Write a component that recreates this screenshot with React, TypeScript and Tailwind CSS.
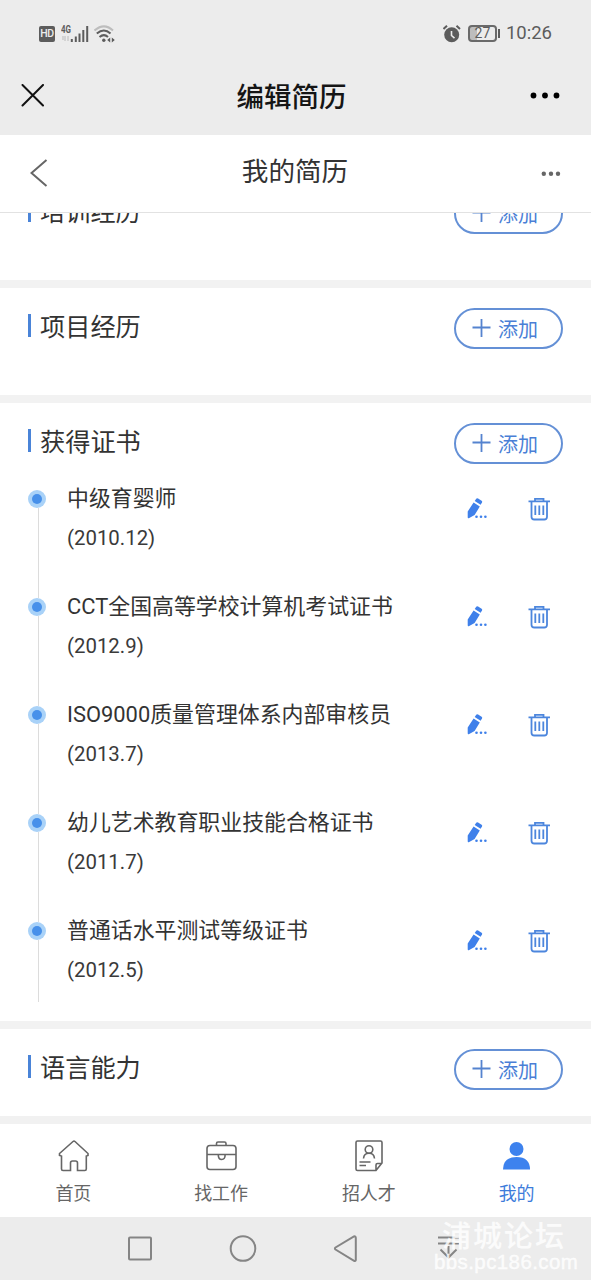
import type { ReactNode } from "react";

type Certificate = {
  name: string;
  date: string;
};

const certificates: Certificate[] = [
  { name: "中级育婴师", date: "(2010.12)" },
  { name: "CCT全国高等学校计算机考试证书", date: "(2012.9)" },
  { name: "ISO9000质量管理体系内部审核员", date: "(2013.7)" },
  { name: "幼儿艺术教育职业技能合格证书", date: "(2011.7)" },
  { name: "普通话水平测试等级证书", date: "(2012.5)" },
];

function StatusBar() {
  return (
    <div className="flex h-[67px] items-center justify-between pl-[39px] pr-[39px] text-[#5c5c5c]">
      <div className="flex items-center">
        <div className="flex h-4 w-4 items-center justify-center rounded-[2px] bg-[#5c5c5c] text-[10.500px] font-medium tracking-[-0.500px] text-[#ececec]">
          HD
        </div>
        <svg className="ml-[6px]" width="28" height="20" viewBox="0 0 28 20">
          <text x="0" y="8.500" fontSize="10.500" fontWeight="700" fill="#5c5c5c" textLength="10" lengthAdjust="spacingAndGlyphs">
            4G
          </text>
          <path d="M2 12v4M4 12v5M7 12v5" stroke="#c4c4c4" strokeWidth="1.200" />
          <path d="M10.800 15v3M14.800 12.500v5.500M18.500 9.500v8.500M22.300 6v12M26.200 2v16" stroke="#5c5c5c" strokeWidth="2" />
        </svg>
        <svg className="ml-[5px]" width="21" height="20" viewBox="0 0 21 20" fill="none">
          <path d="M0.500 6.500Q10 -1.800 19 6.500" stroke="#bdbdbd" strokeWidth="2" />
          <path d="M2.800 9.500Q10 3.500 16.500 9.500M5.500 13Q10 9.300 14 13" stroke="#5c5c5c" strokeWidth="2" />
          <circle cx="9.800" cy="16.300" r="1.700" fill="#5c5c5c" />
          <path d="M16.200 13.500v5l-3-2.500zM17.800 13.500v5l3-2.500z" fill="#5c5c5c" />
        </svg>
      </div>
      <div className="flex items-center">
        <svg width="20" height="20" viewBox="0 0 20 20" fill="none">
          <circle cx="8.700" cy="10.800" r="7.500" fill="#5c5c5c" />
          <path d="M0.500 5L4 1.800M13.500 1.800L17 5" stroke="#5c5c5c" strokeWidth="2" />
          <path d="M8.500 7v4.500l3 2.700" stroke="#ececec" strokeWidth="1.600" />
        </svg>
        <div className="ml-[5px] flex h-[17px] w-[29px] items-center justify-center rounded-[4px] border-2 border-[#6a6a6a] bg-linear-to-r from-[#bdbdbd] from-30% to-transparent to-30% text-[14px]">
          27
        </div>
        <div className="ml-px h-[9px] w-[2px] bg-[#5c5c5c]" />
        <span className="ml-[6px] pt-px text-[18.500px]">10:26</span>
      </div>
    </div>
  );
}

function TitleBar() {
  return (
    <div className="flex h-[68px] items-center justify-between pl-[21px] pr-[30px] pb-[10px]">
      <svg width="24" height="24" viewBox="0 0 24 24" stroke="#111" strokeWidth="2" strokeLinecap="round">
        <path d="M1.500 1l20.500 20.500M22 1L1.500 21.500" />
      </svg>
      <h1 className="pl-[8px] pt-[4px] text-[27.500px] leading-none font-medium text-[#151515]">编辑简历</h1>
      <svg width="31" height="8" viewBox="0 0 31 8" fill="#000">
        <circle cx="3.500" cy="3.500" r="2.900" />
        <circle cx="15" cy="3.500" r="2.900" />
        <circle cx="26.500" cy="3.500" r="2.900" />
      </svg>
    </div>
  );
}

function PageHeader() {
  return (
    <div className="flex h-[78px] shrink-0 items-center justify-between border-b border-[#e2e2e2] bg-white pl-[30px] pr-[30px]">
      <svg width="18" height="29" viewBox="0 0 18 29" fill="none" stroke="#666" strokeWidth="2">
        <path d="M16.500 1L1.500 14l15 13" />
      </svg>
      <h2 className="pb-[3px] pl-px text-[26.600px] leading-none text-[#333]">我的简历</h2>
      <svg width="20" height="6" viewBox="0 0 20 6" fill="#666">
        <circle cx="2.800" cy="2.800" r="2.200" />
        <circle cx="10" cy="2.800" r="2.200" />
        <circle cx="17" cy="2.800" r="2.200" />
      </svg>
    </div>
  );
}

function AddButton() {
  return (
    <button className="flex h-[41px] w-[109px] items-center rounded-full border-2 border-[#6490d6] pl-[16px] text-[20px] leading-none text-[#4a7fd6]">
      <svg width="19" height="19" viewBox="0 0 19 19" stroke="#5583cf" strokeWidth="1.800">
        <path d="M0.500 8.500h18M9.500 0v18" />
      </svg>
      <span className="ml-[7px] pt-[2px]">添加</span>
    </button>
  );
}

function Section({ title, children }: { title: string; children?: ReactNode }) {
  return (
    <section className="bg-white">
      <div className="flex h-[75px] items-start justify-between pr-7 pl-7 pt-[20px]">
        <div className="flex h-[38px] items-center">
          <span className="mb-[4px] h-[23px] w-[3px] bg-[#4a84d8]" />
          <h3 className="ml-[9px] pt-[2px] text-[25.200px] leading-none text-[#333]">{title}</h3>
        </div>
        <AddButton />
      </div>
      {children}
    </section>
  );
}

function EditIcon() {
  return (
    <svg width="22" height="22" viewBox="0 0 22 22" fill="#3f80ea">
      <path d="M7.600 4.500l6.200 4.100L8.600 17l-5.800 3.200Q1.600 20.500 1.700 19V13.500z" />
      <path d="M8.700 3l1.500-2.200q0.700-.8 1.900-.2l3.500 2.200q1 0.700 0.400 1.700l-1.400 2.300z" />
      <circle cx="10.500" cy="18.800" r="1.300" />
      <circle cx="15" cy="18.800" r="1.300" />
      <circle cx="19.400" cy="18.800" r="1.300" />
    </svg>
  );
}

function TrashIcon() {
  return (
    <svg width="22" height="24" viewBox="0 0 22 24" fill="none" stroke="#4c86dd" strokeWidth="1.800">
      <path d="M0.500 4.300h21.500M7 4V1.800h8.500V4M3.500 4.500V19.700q0 2.800 2.800 2.800h9.900q2.800 0 2.800-2.800V4.500M7.300 8.500v9.500M11.300 8.500v9.500M15.300 8.500v9.500" />
    </svg>
  );
}

function CertificateRow({ item, first, last }: { item: Certificate; first: boolean; last: boolean }) {
  return (
    <li className="flex h-[108px] pl-7 pr-[41px]">
      <div className="flex w-[18px] flex-col">
        <div className={`ml-[10px] h-3 w-px ${first ? "" : "bg-[#dcdcdc]"}`} />
        <div className="flex h-[18px] w-[18px] items-center justify-center rounded-full bg-[#a9d2f8]">
          <div className="h-2.5 w-2.5 rounded-full bg-[#4790ea]" />
        </div>
        <div className={`ml-[10px] w-px bg-[#dcdcdc] ${last ? "h-[62px]" : "flex-1"}`} />
      </div>
      <div className="ml-[21px] flex-1 pt-px text-[21.900px] leading-[40px] whitespace-nowrap text-[#333]">
        <p>{item.name}</p>
        <p className="-mt-px text-[20.400px] text-[#3a3a3a]">{item.date}</p>
      </div>
      <div className="flex h-[62px] items-center gap-[40px]">
        <EditIcon />
        <TrashIcon />
      </div>
    </li>
  );
}

function HomeIcon() {
  return (
    <path d="M16 1.500Q17 0.700 18 1.500L31 13.500v2l-1.700.5V29q0 1.500-1.500 1.500H20.500V23q0-2-2-2h-3q-2 0-2 2v7.500H6Q4.500 30.500 4.500 29V16L2.500 15.500v-2z" />
  );
}

function JobIcon() {
  return (
    <>
      <rect x="2" y="5.500" width="29" height="24" rx="3" />
      <path d="M11.500 5V3.500q0-1.500 1.500-1.500h6.500q1.500 0 1.500 1.500V5M2 14.500h29M13.300 15q0 4.500 3.400 4.500t3.400-4.500" />
    </>
  );
}

function TalentIcon() {
  return (
    <>
      <path d="M30 23V2.500q0-1.500-1.500-1.500H5.500Q4 1 4 2.500v26.500q0 1.500 1.500 1.500H24zM30 23.500h-4.500q-1.500 0-1.500 1.500v5.500M7.500 22h11M7.500 25.500h6.500" />
      <circle cx="17" cy="9.500" r="3.800" />
      <path d="M11.500 18.500q.5-5.200 5.500-5.200t5.500 5.200" />
    </>
  );
}

function MineIcon() {
  return (
    <g fill="#3d82ee" stroke="none">
      <circle cx="16.500" cy="9" r="7" />
      <path d="M3 29.500q0-12.500 13.500-12.500T30 29.500z" />
    </g>
  );
}

const tabs = [
  { label: "首页", icon: <HomeIcon /> },
  { label: "找工作", icon: <JobIcon /> },
  { label: "招人才", icon: <TalentIcon /> },
  { label: "我的", icon: <MineIcon />, active: true },
];

function TabBar() {
  return (
    <nav className="grid h-[101px] shrink-0 grid-cols-4 border-t-8 border-[#f1f1f1] bg-white">
      {tabs.map((tab) => (
        <div key={tab.label} className="flex flex-col items-center pt-4">
          <svg width="34" height="32" viewBox="0 0 34 32" fill="none" stroke="#666" strokeWidth="1.600">
            {tab.icon}
          </svg>
          <span className={`mt-[13px] pr-px text-[18px] leading-none ${tab.active ? "text-[#3d7cdb]" : "text-[#666]"}`}>
            {tab.label}
          </span>
        </div>
      ))}
    </nav>
  );
}

function SystemNav() {
  return (
    <div className="relative flex h-[63px] shrink-0 items-center bg-[#ececec] pl-[126px]">
      <svg width="340" height="30" viewBox="0 0 340 30" fill="none" stroke="#858585" strokeWidth="2">
        <rect x="3" y="3.500" width="22" height="22" rx="1" />
        <circle cx="117" cy="14.500" r="12.300" />
        <path d="M229.800 4v22q-.3 1.500-1.700.8L209.500 15.500q-1.200-1 0-2L228 2.500q1.500-.7 1.800 1.500z" />
        <path d="M312 3.500h21M312 9.500h21M322.500 12v11M314.500 15.500l8 8 8-8" />
      </svg>
      <div className="absolute top-[5px] left-[434px] w-[146px] text-white/80">
        <p className="pl-[8px] text-[29px] leading-[30px] font-medium tracking-[2px]">浦城论坛</p>
        <p className="font-['Liberation_Sans'] text-[20.500px] leading-[19px] tracking-[0.400px] [-webkit-text-stroke:0.300px_white]">bbs.pc186.com</p>
      </div>
    </div>
  );
}

export default function App() {
  return (
    <div className="flex h-[1280px] w-[591px] flex-col overflow-hidden bg-white font-[Roboto,'Noto_Sans_CJK_SC',sans-serif]">
      <header className="shrink-0 bg-[#ececec]">
        <StatusBar />
        <TitleBar />
      </header>
      <PageHeader />
      <main className="min-h-0 flex-1 overflow-hidden">
        <div className="-mt-[40px] flex flex-col gap-2 bg-[#f2f2f2]">
          <Section title="培训经历">
            <div className="h-8" />
          </Section>
          <Section title="项目经历">
            <div className="h-8" />
          </Section>
          <Section title="获得证书">
            <ul className="pb-[3px]">
              {certificates.map((item, i) => (
                <CertificateRow key={item.name} item={item} first={i === 0} last={i === certificates.length - 1} />
              ))}
            </ul>
          </Section>
          <Section title="语言能力">
            <div className="h-8" />
          </Section>
        </div>
      </main>
      <TabBar />
      <SystemNav />
    </div>
  );
}
